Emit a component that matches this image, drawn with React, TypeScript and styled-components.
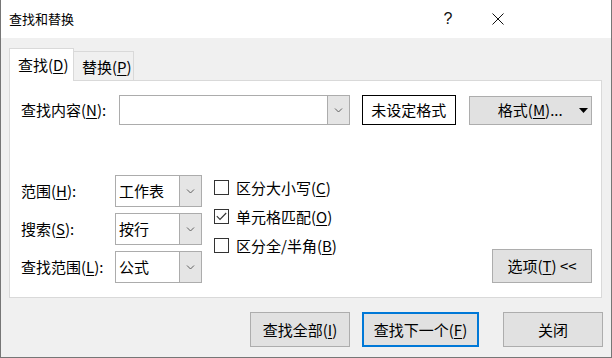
import React from "react";
import styled, { createGlobalStyle } from "styled-components";

const Global = createGlobalStyle`
  html, body { margin: 0; padding: 0; background: #ffffff; }
  body { font-family: "Noto Sans CJK SC", "Microsoft YaHei", sans-serif; }
  * { box-sizing: border-box; }
  u { text-decoration-thickness: 1px; text-underline-offset: 2px; }
`;

const Window = styled.div`
  width: 612px;
  height: 358px;
  border: 1px solid #767676;
  border-top: none;
  background: #f0f0f0;
  display: flex;
  flex-direction: column;
  font-size: 15px;
  line-height: 20px;
  color: #000;
`;

const TitleBar = styled.div`
  height: 38px;
  flex: none;
  background: #ffffff;
  display: flex;
  align-items: center;
  padding-left: 8px;
`;

const Title = styled.div`
  flex: 1;
  font-size: 13px;
  line-height: 18px;
`;

const TitleButton = styled.div<{ $shift?: number }>`
  width: 46px;
  height: 38px;
  display: flex;
  align-items: center;
  justify-content: center;
  padding-right: ${(p) => p.$shift ?? 0}px;
  font-family: "Segoe UI", "Liberation Sans", sans-serif;
  font-size: 16px;
  color: #111;
`;

const TitleButtons = styled.div`
  display: flex;
  margin-right: 90px;
`;

const Tabs = styled.div`
  display: flex;
  align-items: flex-end;
  margin-top: 10px;
  padding-left: 8px;
  height: 33px;
  position: relative;
  z-index: 1;
  margin-bottom: -1px;
`;

const Tab = styled.div<{ $active?: boolean }>`
  height: ${(p) => (p.$active ? 33 : 30)}px;
  width: ${(p) => (p.$active ? 65 : 60)}px;
  display: flex;
  align-items: center;
  padding-left: 8px;
  padding-top: ${(p) => (p.$active ? 0 : 1)}px;
  background: ${(p) => (p.$active ? "#ffffff" : "#f0f0f0")};
  border: 1px solid #d9d9d9;
  border-bottom: ${(p) => (p.$active ? "none" : "1px solid #d9d9d9")};
  border-left: ${(p) => (p.$active ? "1px solid #d9d9d9" : "none")};
`;

const Panel = styled.div`
  margin: 0 9px 0 8px;
  height: 218px;
  flex: none;
  background: #ffffff;
  border: 1px solid #d9d9d9;
  padding: 14px 9px 13px 11px;
  display: flex;
  flex-direction: column;
`;

const FindRow = styled.div`
  display: flex;
  align-items: center;
  height: 30px;
`;

const FindLabel = styled.div`
  width: 98px;
  flex: none;
`;

const Combo = styled.div<{ $width: number; $height: number }>`
  width: ${(p) => p.$width}px;
  height: ${(p) => p.$height}px;
  flex: none;
  display: flex;
  border: 1px solid #acacac;
  background: #ffffff;
`;

const ComboText = styled.div`
  flex: 1;
  display: flex;
  align-items: center;
  padding-left: 3px;
`;

const ComboDrop = styled.div`
  width: 22px;
  flex: none;
  background: #e5e5e5;
  border-left: 1px solid #acacac;
  display: flex;
  align-items: center;
  justify-content: center;
`;

const FormatPreview = styled.div`
  margin-left: 12px;
  width: 94px;
  height: 30px;
  border: 1px solid #000;
  display: flex;
  align-items: center;
  justify-content: center;
  background: #fff;
`;

const Button = styled.div<{ $width: number; $height: number; $default?: boolean }>`
  width: ${(p) => p.$width}px;
  height: ${(p) => p.$height}px;
  flex: none;
  background: #e1e1e1;
  border: ${(p) => (p.$default ? "2px solid #0078d7" : "1px solid #adadad")};
  display: flex;
  align-items: center;
  justify-content: center;
`;

const FormatButton = styled.div`
  margin-left: 13px;
  width: 124px;
  height: 29px;
  background: #e1e1e1;
  border: 1px solid #adadad;
  display: grid;
  grid-template-columns: 1fr auto 1fr;
  align-items: center;
`;

const FormatArrow = styled.div`
  justify-self: end;
  padding-right: 3px;
  display: flex;
`;

const Lower = styled.div`
  margin-top: 50px;
  display: flex;
  align-items: flex-start;
  flex: 1;
`;

const OptionsGrid = styled.div`
  display: grid;
  grid-template-columns: 94px 87px;
  grid-auto-rows: 32px;
  row-gap: 6px;
  align-items: center;
`;

const Checks = styled.div`
  margin-left: 12px;
  padding-top: 5px;
  display: flex;
  flex-direction: column;
  gap: 14px;
`;

const CheckRow = styled.div`
  display: flex;
  align-items: center;
  height: 15px;
  gap: 7px;
`;

const Box = styled.div`
  width: 15px;
  height: 15px;
  border: 1px solid #333;
  background: #fff;
  display: flex;
  align-items: center;
  justify-content: center;
`;

const OptionsSlot = styled.div`
  margin-left: auto;
  align-self: flex-end;
  margin-bottom: 1px;
`;

const Footer = styled.div`
  margin-top: 14px;
  display: flex;
  justify-content: flex-end;
  padding-right: 8px;
`;

const Gap = styled.div<{ $w: number }>`
  width: ${(p) => p.$w}px;
  flex: none;
`;

const Chevron = () => (
  <svg width="9" height="6" viewBox="0 0 9 6">
    <path d="M1 1.5 L4.5 5 L8 1.5" fill="none" stroke="#606060" strokeWidth="1" />
  </svg>
);

const Check = () => (
  <svg width="11" height="9" viewBox="0 0 11 9">
    <path d="M0.8 4.2 L4 7.4 L10.2 1" fill="none" stroke="#333" strokeWidth="1.1" />
  </svg>
);

function ComboBox({ text, width, height }: { text?: string; width: number; height: number }) {
  return (
    <Combo $width={width} $height={height}>
      <ComboText>{text}</ComboText>
      <ComboDrop>
        <Chevron />
      </ComboDrop>
    </Combo>
  );
}

function CheckItem({ checked, children }: { checked?: boolean; children: React.ReactNode }) {
  return (
    <CheckRow>
      <Box>{checked && <Check />}</Box>
      <span>{children}</span>
    </CheckRow>
  );
}

export default function App() {
  return (
    <>
      <Global />
      <Window>
        <TitleBar>
          <Title>查找和替换</Title>
          <TitleButtons>
            <TitleButton $shift={8}>?</TitleButton>
            <TitleButton>
              <svg width="12" height="12" viewBox="0 0 12 12">
                <path d="M0.5 0.5 L11.5 11.5 M11.5 0.5 L0.5 11.5" stroke="#111" strokeWidth="1" />
              </svg>
            </TitleButton>
          </TitleButtons>
        </TitleBar>
        <Tabs>
          <Tab $active>
            查找(<u>D</u>)
          </Tab>
          <Tab>
            替换(<u>P</u>)
          </Tab>
        </Tabs>
        <Panel>
          <FindRow>
            <FindLabel>
              查找内容(<u>N</u>):
            </FindLabel>
            <ComboBox width={231} height={30} />
            <FormatPreview>未设定格式</FormatPreview>
            <FormatButton>
              <span />
              <span>
                格式(<u>M</u>)...
              </span>
              <FormatArrow>
                <svg width="9" height="5" viewBox="0 0 9 5">
                  <path d="M0 0 L9 0 L4.5 5 Z" fill="#000" />
                </svg>
              </FormatArrow>
            </FormatButton>
          </FindRow>
          <Lower>
            <OptionsGrid>
              <span>
                范围(<u>H</u>):
              </span>
              <ComboBox text="工作表" width={87} height={32} />
              <span>
                搜索(<u>S</u>):
              </span>
              <ComboBox text="按行" width={87} height={32} />
              <span>
                查找范围(<u>L</u>):
              </span>
              <ComboBox text="公式" width={87} height={32} />
            </OptionsGrid>
            <Checks>
              <CheckItem>
                区分大小写(<u>C</u>)
              </CheckItem>
              <CheckItem checked>
                单元格匹配(<u>O</u>)
              </CheckItem>
              <CheckItem>
                区分全/半角(<u>B</u>)
              </CheckItem>
            </Checks>
            <OptionsSlot>
              <Button $width={100} $height={34}>
                选项(<u>T</u>)&nbsp;&lt;&lt;
              </Button>
            </OptionsSlot>
          </Lower>
        </Panel>
        <Footer>
          <Button $width={100} $height={35}>
            查找全部(<u>I</u>)
          </Button>
          <Gap $w={12} />
          <Button $width={117} $height={35} $default>
            查找下一个(<u>F</u>)
          </Button>
          <Gap $w={24} />
          <Button $width={100} $height={35}>
            关闭
          </Button>
        </Footer>
      </Window>
    </>
  );
}
